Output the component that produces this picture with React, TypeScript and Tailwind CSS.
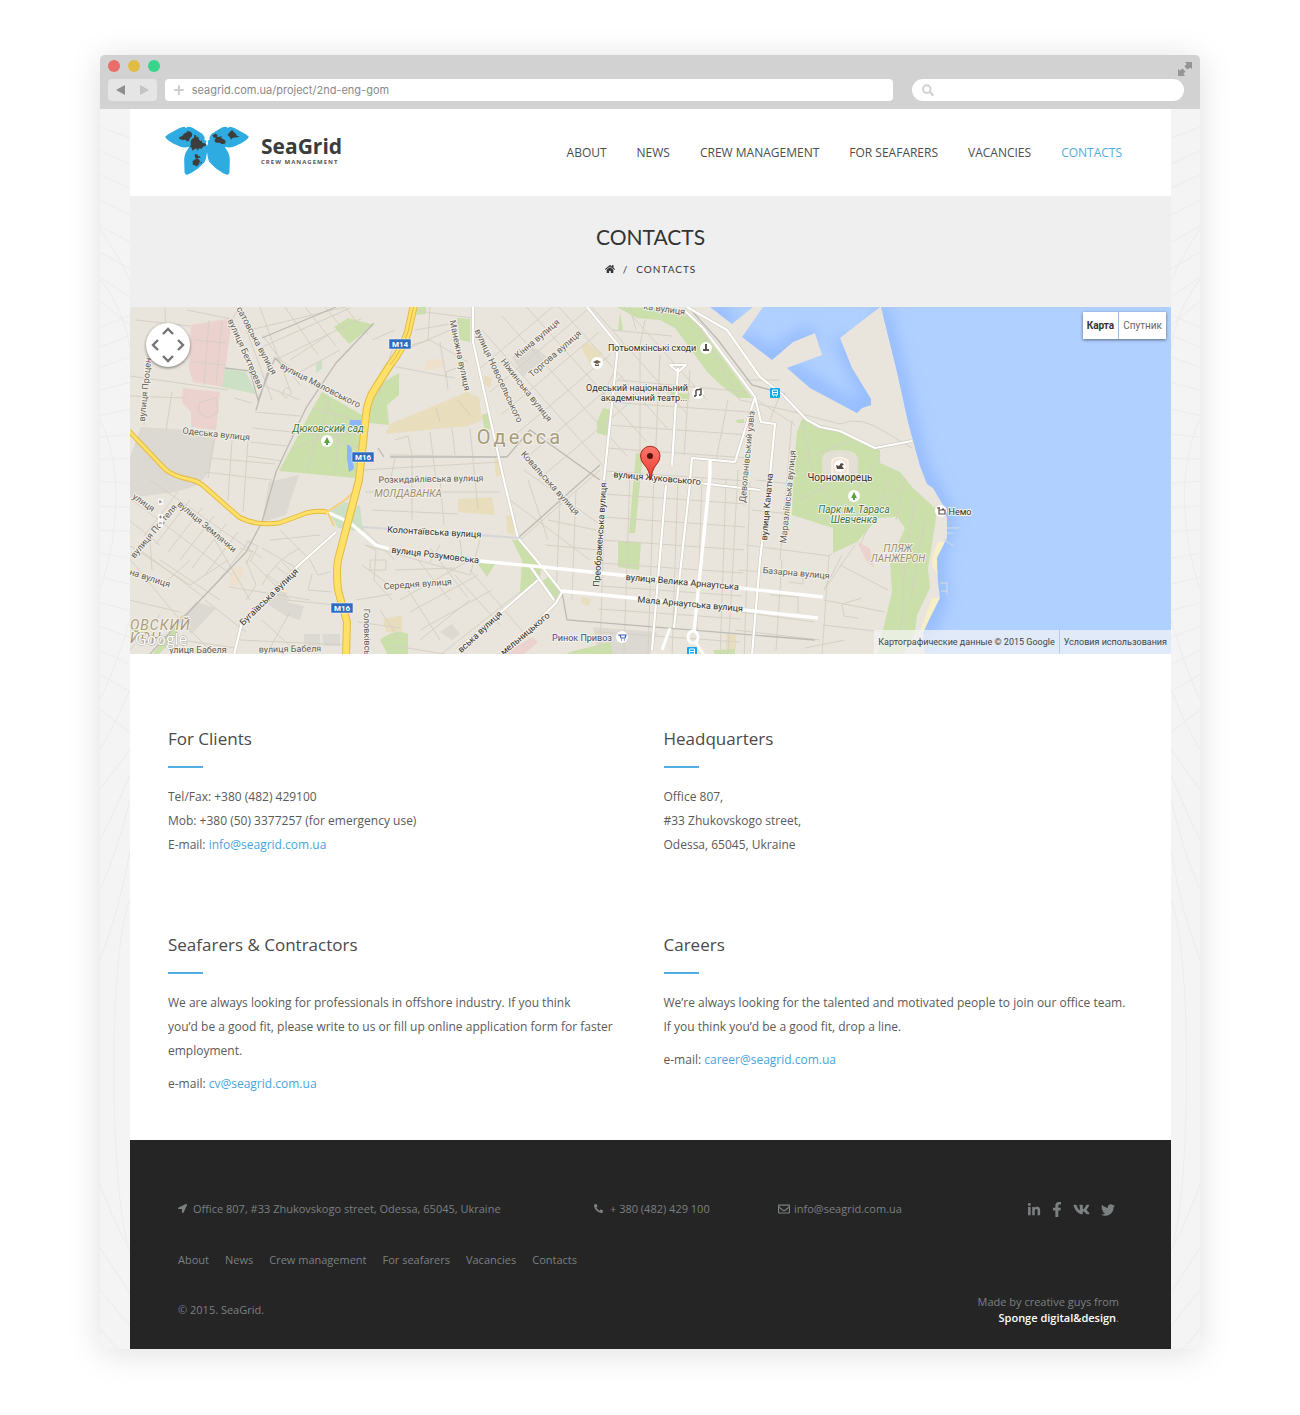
import type { ReactNode } from "react";
import {
  FaFacebookF,
  FaHome,
  FaLinkedinIn,
  FaLocationArrow,
  FaPhoneAlt,
  FaRegEnvelope,
  FaTwitter,
  FaVk,
} from "react-icons/fa";
import { clsx } from "clsx";

const navLinks = [
  "About",
  "News",
  "Crew management",
  "For seafarers",
  "Vacancies",
  "Contacts",
];

const socials = [
  { label: "LinkedIn", icon: <FaLinkedinIn size={14} /> },
  { label: "Facebook", icon: <FaFacebookF className="h-[15px] w-2.5" /> },
  { label: "VK", icon: <FaVk size={17} /> },
  { label: "Twitter", icon: <FaTwitter size={14} /> },
];

/* ---------- Browser frame ---------- */

function BrowserBar() {
  return (
    <div className="rounded-t-[5px] bg-[#d2d2d2] px-2 pb-2">
      <div className="flex h-6 items-start justify-between pt-[5px]">
        <div className="flex gap-2">
          <span className="size-3 rounded-full bg-[#e96d69]" />
          <span className="size-3 rounded-full bg-[#dfbd45]" />
          <span className="size-3 rounded-full bg-[#36d68a]" />
        </div>
        <button aria-label="Full screen" className="mt-0.5">
          <svg width="14" height="14" viewBox="0 0 14 14" fill="#949494">
            <path d="M7 0h7v7l-2-1.600L9.500 7.500 6.500 4.500 8.700 2z" />
            <path d="M7 14H0V7l2 1.600L4.500 6.500 7.500 9.500 5.300 12z" />
          </svg>
        </button>
      </div>
      <div className="flex h-[22px] items-stretch pr-2">
        <div className="mr-2 flex w-[49px] items-center justify-around rounded bg-[#e5e5e5]">
          <button aria-label="Back">
            <svg width="9" height="10" viewBox="0 0 9 10" fill="#8f8f8f">
              <path d="M0 5l9-5v10z" />
            </svg>
          </button>
          <button aria-label="Forward">
            <svg width="9" height="10" viewBox="0 0 9 10" fill="#c4c4c4">
              <path d="M9 5L0 0v10z" />
            </svg>
          </button>
        </div>
        <label className="mr-[19px] flex flex-1 items-center gap-2 rounded bg-white px-[9px]">
          <svg width="10" height="10" viewBox="0 0 10 10" fill="#cdcdcd">
            <path d="M4 0h2v4h4v2H6v4H4V6H0V4h4z" />
          </svg>
          <input
            type="text"
            aria-label="Address"
            defaultValue="seagrid.com.ua/project/2nd-eng-gom"
            className="w-full bg-transparent font-['Inter',sans-serif] text-[11px] text-[#8a8a8a] outline-none"
          />
        </label>
        <label className="flex w-[272px] items-center rounded-full bg-white px-2.5">
          <svg width="13" height="13" viewBox="0 0 13 13" fill="none" stroke="#d0d0d0" strokeWidth="2">
            <circle cx="5" cy="5" r="4" />
            <path d="M8 8l4 4" strokeWidth="2.4" />
          </svg>
          <input type="search" aria-label="Search" className="w-full bg-transparent px-2 text-[11px] outline-none" />
        </label>
      </div>
    </div>
  );
}

// Faint globe lines that show beside the page
function Gutter({ flip, className }: { flip?: boolean; className: string }) {
  return (
    <div className={clsx("relative shrink-0 overflow-hidden", className)}>
      <svg
        className={clsx("absolute inset-0 h-full w-full", flip && "-scale-x-100")}
        viewBox="0 0 30 1239"
        preserveAspectRatio="none"
        fill="none"
        stroke="#ececec"
      >
        <path d="M0 18L30 29M0 42L30 55M0 66L30 79M0 91L30 106M0 117L30 133M0 143L30 160M0 168L30 188M0 192L30 216M0 218L30 206M0 238L30 226M0 258L30 248M0 281L30 273M0 306L30 300M0 328L30 325M0 350L30 349M0 372L30 374M0 397L30 398M0 421L30 422M0 444L30 449M0 468L30 475M0 493L30 501M0 517L30 528M0 541L30 555M0 565L30 582" />
        <path d="M0 120Q18 145 30 172M0 170Q24 200 30 240M0 310Q16 345 16 386Q16 435 0 480M30 510Q15 560 0 590M0 600L30 623M0 640Q18 610 30 580M0 680L30 640" />
        <path d="M30 790C9 840 9 1060 27 1131M0 850Q20 800 30 740M0 780Q18 740 30 690M0 730Q16 700 30 665M0 1074Q10 1104 30 1140M0 1138L30 1183M0 1180L30 1216M0 1219L18 1239" />
      </svg>
    </div>
  );
}

/* ---------- Header ---------- */

function Logo() {
  return (
    <a href="#home" className="flex items-start gap-3" aria-label="SeaGrid Crew Management">
      <svg width="84" height="49" viewBox="0 0 250 146">
        <g fill="#2eabe1">
          <path
            id="wing"
            d="M0 33L8 25 42 7Q50 2 58 2L62 6 68 2Q76 2 82 5L112 24 118 34 117 41 123 44 122 52 125 60V78L122 96 118 107 100 125 78 140 66 145Q59 146 58 138L57 100Q58 82 66 72L72 62Q60 66 46 62L24 52 8 42z"
          />
          <use href="#wing" transform="matrix(-1 0 0 1 250 0)" />
        </g>
        <g fill="#3d3d3d">
          <path d="M41 34l10-4 5-7 8-4 3-4 9 2 5 6-1 8-6 5-2 8-7 2-4-5-8 1-10-3z" />
          <path d="M76 46l4-7 7-4-1-7 5-2 2 7 6-1 2 8 5 5 3-2 2 7 10 3 2 5-9 3-5 7-8-2-3 8-4-7-5 1-7 6-3-9-5-5 3-4z" />
          <path d="M88 84l10 1-2 3 7 2 4 6-7-2-4 4-6-2zM82 104l10-6 9 1 3 6-3 9-7 7-5-4-6-1zM106 106l4 3-4 4z" />
          <path d="M141 28l8-5 8 3-3 5 8 2 7-3-2 6 10 5 4 5-3 7-9 1-7-4-12-1-3-7 5-6-7-2z" />
          <path d="M186 27l7-9 7-6 4 5 6 5 4 7 8 3-12 2-8 1-6 6-2-7z" />
        </g>
      </svg>
      <span className="flex flex-col pt-2 font-['Open_Sans',sans-serif] font-bold text-[#3c3c3c]">
        <span className="text-[21px] leading-6">SeaGrid</span>
        <span className="text-[6px] leading-2 tracking-[1px] text-[#555]">CREW MANAGEMENT</span>
      </span>
    </a>
  );
}

function Header() {
  return (
    <header className="flex h-[87px] items-center justify-between bg-white pr-[49px] pb-1 pl-[35px]">
      <Logo />
      <nav className="flex gap-[30px] pt-1 text-[12px] uppercase text-[#4d4d4d]">
        {navLinks.map((link) => (
          <a key={link} href={`#${link}`} className={clsx(link === "Contacts" && "text-[#52ace0]")}>
            {link}
          </a>
        ))}
      </nav>
    </header>
  );
}

/* ---------- Map ---------- */

// n parallel lines, each shifted by (dx, dy) from the one before
const hatch = (x1: number, y1: number, x2: number, y2: number, dx: number, dy: number, n: number) =>
  Array.from({ length: n }, (_, i) => `M${x1 + dx * i} ${y1 + dy * i}L${x2 + dx * i} ${y2 + dy * i}`).join("");

const minorStreets = [
  // north-west blocks
  "M130 376L228 390M130 396L186 398M148 350L144 425M165 307L166 360M166 360L184 362M136 320L190 326M172 392L166 430M187 310L232 319L240 307M209 320L204 385M222 322L216 384M196 340L226 343M193 362L226 365M200 402L216 398L218 412L208 418L198 412z",
  hatch(240, 312, 272, 400, 18, -10, 2),
  "M262 335L300 385M250 330L345 307M262 347L350 308M275 360L362 318M285 307L318 355M305 307L336 346M325 307L352 340M345 307L368 335M290 360L328 335M300 372L340 350M262 385L300 400M268 370L276 358L290 366M282 395Q286 382 292 392L286 398z",
  "M255 412L300 416M252 428L292 432M250 442L288 446M247 456L282 461M234 398L252 403M214 440L208 478M232 440L228 500M248 440L243 512M210 458L275 464M205 472L272 480",
  "M312 408L355 420M322 400Q346 420 334 470M300 430L360 448M292 450Q330 430 358 434M306 470L330 400",
  // west
  hatch(178, 492, 144, 536, 12, 8, 7),
  "M150 480L262 558M132 500L232 575M129 545L190 585L228 560M129 558L180 620M140 550L205 598M150 540L152 570M160 560L220 600M129 600L180 612M215 540L250 600M250 560L290 600M262 548L300 570M270 540L320 535M280 530L310 560M262 585Q275 560 300 548M229 587L310 600M205 600L246 632M160 615L130 650M180 640L236 648M190 630L215 655M129 520L160 545M168 580L190 560M246 560L256 585L246 600",
  "M275 566l14 10M282 562l12 12M266 574l16 12M240 548l12 4-6 12M246 541l12 5-8 16M310 560L318 575 330 572M312 574L308 590 332 592M286 600L345 606M240 640L345 645M262 620L300 655M270 648L290 612M365 545L376 550 374 580 392 600M362 565L396 590M356 600L392 594M358 622L400 628M370 560h16v10h-16z",
  // centre-west
  "M379 395L392 350L430 340L468 362M392 366L455 378M400 352L450 330M415 330L462 322M410 310L472 318M430 307L428 340M440 342L446 378M395 330L372 340M390 455L505 457M395 440L408 436 412 455M430 432L436 480M452 428L455 455M470 428L478 510M362 470L500 462M365 492L500 492M395 458L390 482M412 458L412 520M440 480L444 525M372 510L458 514M448 390L446 372L462 366M436 408L440 422M458 400L470 415",
  "M365 545L470 575M440 545L430 562M395 570L455 568M400 600L470 560M410 612L478 575M420 630L492 590M380 610L400 640M405 585L440 640M455 575L500 625M470 570L530 640M480 540L470 575M418 560L450 600M430 548L468 598M460 540L462 558M390 645L450 655M420 640L470 600M440 655L520 592M452 560Q470 550 480 565M362 528L395 560",
  // diagonal centre blocks
  hatch(482, 330, 607, 470, 20, -14, 6),
  hatch(478, 370, 575, 288, 12, 22, 6),
  "M520 540L600 470M528 480L548 540M510 500L590 560M524 470L605 528M545 545L600 550M548 520L596 530M560 500L556 600M576 490L572 600",
  // right blocks
  hatch(606, 470, 600, 650, 24, 2, 7),
  hatch(608, 402, 750, 412, -1, 23, 11),
  "M612 330L672 336M617 345L672 350M630 307L636 330M645 320L640 345M618 365L600 400M618 380L748 392M640 350L640 455M660 355L655 465M690 370L684 455M728 400L716 460M744 380L780 380M780 395L770 420M757 400L795 425M738 470L728 655M792 420L780 560M756 480L790 484M752 510L790 514M746 545L830 556M738 570L830 578M740 612L815 622M735 630L820 640M782 560L776 650M832 554L829 555L822 655M842 555L824 590M855 545L824 590M840 565L888 590M824 600L885 612M823 625L884 632M805 648L845 640M862 598L842 604 844 616 858 618M789 582l14 2v-6M770 595l28 2v16",
  // park walks
  "M802 425L815 480L840 510M815 455L850 440M880 455L850 500L838 520M890 480L860 545M905 478L896 520M915 500L905 560L900 650M925 520L910 600M800 500L835 480M870 520L902 485",
  "M700 328L740 400Q790 410 840 424Q860 415 885 432L912 448",
];

const whiteRoads = [
  "M473 307V342L505 485L518 538L543 568L562 592L556 603L503 655",
  "M587 307L618 345L604 480",
  "M678 368L672 465M670 365L678 372L686 365z",
  "M683 309L703 328L755 397L735 462L692 458L690 480",
  "M755 397L761 422L775 424L769 485L760 560L752 655",
  "M687 307L727 330L760 377L782 394L807 420L820 427L840 431L875 448L912 441",
  "M666 485L652 650M690 483L674 628M336 532L299 565L242 622L234 655M530 566L554 600M538 580L457 650",
  "M612 473L760 490",
];

type MapLabel = {
  t: string;
  x: number;
  y: number;
  r?: number;
  s?: number;
  kind?: "street" | "place" | "park" | "district" | "market";
};

const labelColor = {
  street: "#625d56",
  place: "#33302c",
  park: "#3d7a3c",
  district: "#9c8d6f",
  market: "#3f4a85",
};

const labels: MapLabel[] = [
  { t: "вулиця Маловського", x: 319, y: 388, r: 27 },
  { t: "вулиця Бехтерева", x: 243, y: 355, r: 66 },
  { t: "сатовська вулиця", x: 254, y: 342, r: 62 },
  { t: "Одеська вулиця", x: 216, y: 437, r: 6 },
  { t: "вулиця Процен", x: 148, y: 390, r: -84 },
  { t: "Дюковский сад", x: 328, y: 432, s: 10, kind: "park" },
  { t: "Манежна вулиця", x: 457, y: 356, r: 78 },
  { t: "вулиця Новосельського", x: 496, y: 377, r: 65 },
  { t: "Ніжинська вулиця", x: 524, y: 392, r: 52 },
  { t: "Кінна вулиця", x: 539, y: 341, r: -40 },
  { t: "Торгова вулиця", x: 557, y: 356, r: -41 },
  { t: "Потьомкінські сходи", x: 652, y: 351, kind: "place" },
  { t: "Одеський національний", x: 637, y: 391, kind: "place" },
  { t: "академічний театр...", x: 644, y: 401, kind: "place" },
  { t: "Розкидайлівська вулиця", x: 431, y: 482, r: -1 },
  { t: "МОЛДАВАНКА", x: 408, y: 497, s: 10, kind: "district" },
  { t: "Ковальська вулиця", x: 548, y: 485, r: 48 },
  { t: "Колонтаївська вулиця", x: 434, y: 535, r: 3, kind: "place" },
  { t: "вулиця Розумовська", x: 435, y: 558, r: 7, kind: "place" },
  { t: "Середня вулиця", x: 418, y: 587, r: -4 },
  { t: "Преображенська вулиця", x: 603, y: 535, r: -86, kind: "place" },
  { t: "вулиця Жуковського", x: 657, y: 481, r: 5, kind: "place" },
  { t: "вулиця Велика Арнаутська", x: 682, y: 585, r: 5, kind: "place" },
  { t: "Мала Арнаутська вулиця", x: 690, y: 607, r: 5, kind: "place" },
  { t: "Деволанівський узвіз", x: 750, y: 457, r: -84 },
  { t: "вулиця Канатна", x: 770, y: 507, r: -85, kind: "place" },
  { t: "Маразліївська вулиця", x: 791, y: 497, r: -84 },
  { t: "Базарна вулиця", x: 796, y: 576, r: 5 },
  { t: "Чорноморець", x: 840, y: 481, s: 10, kind: "place" },
  { t: "Парк ім. Тараса", x: 854, y: 513, s: 10, kind: "park" },
  { t: "Шевченка", x: 854, y: 523, s: 10, kind: "park" },
  { t: "ПЛЯЖ", x: 898, y: 552, s: 10, kind: "district" },
  { t: "ЛАНЖЕРОН", x: 898, y: 562, s: 10, kind: "district" },
  { t: "Немо", x: 960, y: 515, kind: "place" },
  { t: "Ринок Привоз", x: 582, y: 641, kind: "market" },
  { t: "вулиця Землячки", x: 205, y: 529, r: 40 },
  { t: "вулиця Пестеля", x: 156, y: 533, r: -50 },
  { t: "улиця", x: 142, y: 505, r: 35 },
  { t: "на вулиця", x: 149, y: 581, r: 18 },
  { t: "Бугаївська вулиця", x: 271, y: 599, r: -44, kind: "place" },
  { t: "Головківсь", x: 364, y: 632, r: 89 },
  { t: "улиця Бабеля", x: 198, y: 653 },
  { t: "вулиця Бабеля", x: 290, y: 652, r: -1 },
  { t: "вська вулиця", x: 482, y: 634, r: -43, kind: "place" },
  { t: "мельницького", x: 527, y: 636, r: -40, kind: "place" },
  { t: "ка вулиця", x: 664, y: 312, r: 8 },
];

function Poi({ x, y, children }: { x: number; y: number; children: ReactNode }) {
  return (
    <g transform={`translate(${x} ${y})`}>
      <circle r="6" fill="#fff" />
      {children}
    </g>
  );
}

function MapDrawing() {
  return (
    <svg
      className="absolute inset-0 h-full w-full font-['Roboto',sans-serif]"
      viewBox="130 307 1041 347"
      preserveAspectRatio="xMidYMid slice"
      role="img"
      aria-label="Map of Odessa"
    >
      <defs>
        <linearGradient id="pin" x1="0" y1="0" x2="0" y2="1">
          <stop offset="0" stopColor="#ff776b" />
          <stop offset="1" stopColor="#e8392f" />
        </linearGradient>
        <filter id="shore" x="-20%" y="-20%" width="140%" height="140%">
          <feGaussianBlur stdDeviation="8" />
        </filter>
        <clipPath id="water">
          <path d="M881 307L897 372L908 422L920 466L927 484L933 488L943 505L947 518L947 538L937 558L938 582L940 598L930 618L923 633L925 655H1171V307z" />
          <path d="M763 307L742 337L772 360L793 342L815 333L822 355L787 368L810 388L857 413L862 408L871 405V399L852 368L840 338L880 307z" />
          <path d="M710 307H753L732 324z" />
        </clipPath>
      </defs>

      <rect x="100" y="300" width="1100" height="370" fill="#e9e5dc" />

      {/* built-up and industrial areas */}
      <g fill="#dcd8d2">
        <path d="M141 427L217 432L209 472L198 485L176 492L129 498V460z" />
        <path d="M269 482L299 475L286 515L262 522zM196 602L216 608L192 634L178 622zM274 590L287 593V617L265 602zM287 602L304 606L300 620L287 616z" />
        <path d="M512 357L532 345L547 357L523 377zM593 627L657 632L650 655H598zM304 634h16v18h-16zM322 634h18v12h-16zM440 632l12-8 8 10-8 6z" />
      </g>
      <g fill="#ebd2cf">
        <path d="M191 325L232 318L223 387L193 382L189 368z" />
        <path d="M183 388L220 392L216 430L191 427V412L182 402z" />
        <path d="M500 655L533 637L538 642L523 655zM857 542L870 548L874 568L866 560z" />
      </g>
      <g fill="#e8ddbd">
        <path d="M390 424L467 392L479 397L482 420L468 426L385 434z" />
        <path d="M587 342L602 353L593 370L581 347zM458 499L492 497L495 515L458 512zM383 619L402 615V632H386zM484 375l8 3-2 10-6-4zM494 458l6 2 2 15-6 2zM506 515l6 1 2 20-7-4zM582 597l9 2-2 7-8-3zM726 633h10v16h-10z" />
        <path d="M232 570q6-6 12-2l-4 14q-8 8-10 2zM425 362q12-6 20 0-4 8-20 8z" fill="#eee0cc" />
      </g>
      <g fill="#cadfaa">
        <path d="M322 392L362 415L356 478L279 471L309 415z" />
        <path d="M348 318L374 325L349 344L334 327zM399 373L380 384L371 398L369 423L389 425L387 405L399 395z" />
        <path d="M457 318L470 319V342L460 340zM482 415L490 412V430L484 428zM418 307h8v7l-10 1z" />
        <path d="M617 307L637 318L660 320L675 328L690 348L707 372L722 386L738 398L752 398L702 330L683 309z" />
        <path d="M618 541L641 542L639 570L618 567zM636 453L643 454L635 533H629z" />
        <path d="M512 540L520 540L541 568L540 580L520 593L522 560zM540 583L548 577L560 592L556 600zM477 563L495 564L487 577z" />
        <path d="M570 652L610 642L613 655H565zM380 640q14-12 28-6v21h-20zM713 650l22-1v6h-20z" />
        <path d="M597 422l6-14 8 2-4 26-10-3zM620 312l3 18-5 1zM736 420l8-1v4h-7zM670 392l20 2-2 8-16-4z" />
        <path d="M802 419L840 431L880 450L880 463L900 472L913 488L937 510L935 525L928 568L930 588L917 615L915 632L903 655H877L892 592L890 562L905 528L897 517L878 518L857 542L833 553V528L792 515L793 475L797 432z" />
        <path d="M180 617l6-4-14 28-14 14h-6z" />
      </g>
      <path d="M225 369L246 372L256 394L222 387zM316 365l6-6v10l-6 4zM329 512L345 502L360 506L363 532L338 528z" fill="#cbe0c4" />
      <path d="M822 460q0-10 18-10t18 10v18q-18 6-36 0z" fill="#e4dfd5" />
      <path d="M832 460q8-5 16 0v14h-16z" fill="#f3e3d3" stroke="#fff" />
      <path d="M938 542h8l-7 14-3 14 5-1-1 9-8-12q0-14 6-24zM932 598h9l-11 20-7 15-2-4z" fill="#f7efc5" />
      <path d="M350 420h11v6h-6l-6 2zM347 445q6-1 5 12l2 12-5 3-2-14z" fill="#8ab5f9" />

      {/* water, darker along the shore */}
      <g clipPath="url(#water)">
        <rect x="700" y="300" width="480" height="360" fill="#b0d0ff" />
        <g fill="none" stroke="#8eb6ff" strokeWidth="13" filter="url(#shore)">
          <path d="M881 307L897 372L920 466L933 488L947 518L937 558L940 598L923 640" />
          <path d="M742 337L772 360L793 342L815 333M787 368L857 413L871 400L840 338M710 307L732 324" />
        </g>
      </g>
      <path d="M947 528h12M947 533h6M944 540l10 6M940 583h7v12M941 591h6" fill="none" stroke="#d8dbdc" />

      {/* streets */}
      <path d={minorStreets.join("")} fill="none" stroke="#d6d0c4" strokeWidth="1" />
      <g fill="none" stroke="#bcbab6" strokeWidth="1.3">
        <path d="M374 323L336 363L306 408L276 472L262 522L246 552L186 615L149 655" />
        <path d="M262 338L336 307M225 368L250 371L258 400L275 358L282 365M256 410L270 365M390 457L507 457L530 430L600 480M518 538L600 465M562 592L567 620L815 640M378 448L384 457" />
        <path d="M690 309L718 340L752 385L785 394" />
      </g>
      <g fill="none" strokeLinejoin="round">
        <path d={whiteRoads.join("")} stroke="#d2ccc0" strokeWidth="3.4" />
        <path d={whiteRoads.join("")} stroke="#fff" strokeWidth="2.2" />
        <path d="M562 591L633 598L818 618M480 561L543 567L620 575L823 597M710 460L710 475L694 632M327 512L349 522L376 545L389 549" stroke="#fff" strokeWidth="3.4" />
        <path d="M362 527L520 538" stroke="#d6d6d6" strokeWidth="2" />
        <ellipse cx="693" cy="637" rx="5" ry="6" stroke="#fff" strokeWidth="3" />
        <path d="M696 643L704 655M670 628L662 650" stroke="#fff" strokeWidth="3" />
      </g>
      <g fill="none" strokeLinejoin="round">
        <path d="M327 512L345 500L356 490M328 513L334 526" stroke="#f4cf7c" strokeWidth="2" />
        <path d="M129 431L165 469Q172 476 192 480Q200 482 206 488L239 517Q255 526 279 523Q296 517 306 513Q318 510 327 512" stroke="#e5b944" strokeWidth="5" />
        <path d="M129 431L165 469Q172 476 192 480Q200 482 206 488L239 517Q255 526 279 523Q296 517 306 513Q318 510 327 512" stroke="#ffe168" strokeWidth="3" />
        <path d="M415 300L408 332Q402 350 390 365L376 387Q367 400 366 415L359 480L338 560Q336 572 338 590L347 622L346 656" stroke="#e5b944" strokeWidth="8" />
        <path d="M415 300L408 332Q402 350 390 365L376 387Q367 400 366 415L359 480L338 560Q336 572 338 590L347 622L346 656" stroke="#ffe168" strokeWidth="6" />
        <path d="M415 300L408 332Q402 350 390 365" stroke="#e5b944" />
      </g>

      {/* road shields */}
      {[
        ["M14", 389, 339],
        ["M16", 352, 452],
        ["M16", 331, 603],
      ].map(([name, x, y]) => (
        <g key={`${x}`} transform={`translate(${x} ${y})`}>
          <rect width="22" height="10" fill="#2f6cc0" stroke="#fff" strokeWidth="0.5" />
          <text x="11" y="8" textAnchor="middle" fontSize="8" fontWeight="700" fill="#fff">
            {name}
          </text>
        </g>
      ))}

      {/* points of interest */}
      <Poi x={597} y={363}>
        <path d="M-4-1l4-2 4 2-4 2zM-2 1v2h4V1L0 2z" fill="#6a5a4c" />
      </Poi>
      <Poi x={706} y={348}>
        <path d="M-1-4h2v5h2v2h-6V1h2z" fill="#5b5048" />
      </Poi>
      <Poi x={698} y={393}>
        <path d="M-2-3l5-1v6M-2-3v6M-4 3h2M1 2h2" fill="none" stroke="#4c443e" strokeWidth="1.4" />
      </Poi>
      <Poi x={327} y={441}>
        <path d="M0-4l3 6h-2v2h-2V2h-2z" fill="#57a53c" />
      </Poi>
      <Poi x={854} y={496}>
        <path d="M0-4l3 6h-2v2h-2V2h-2z" fill="#57a53c" />
      </Poi>
      <Poi x={840} y={466}>
        <path d="M-4-1l3 1 2-3 3 1-2 2 2 3h-7z" fill="#55493f" />
      </Poi>
      <Poi x={941} y={511}>
        <path d="M-2-1h6v4h-6zM-4-3h3M-2-4v3M1-2h2" fill="none" stroke="#6b4d40" strokeWidth="1.2" />
      </Poi>
      <Poi x={622} y={637}>
        <path d="M-4-2h2l1 3h4l1-3h-6M-1 3h1M2 3h1" fill="none" stroke="#3a5bb0" strokeWidth="1.2" />
      </Poi>
      {[
        [770, 388],
        [687, 647],
      ].map(([x, y]) => (
        <g key={x} transform={`translate(${x} ${y})`}>
          <rect width="10" height="10" rx="1" fill="#12a9ee" />
          <path d="M2.500 2h5v5h-5zM3 8h1M6 8h1M3 4.500h4" fill="none" stroke="#fff" />
        </g>
      ))}

      {/* labels */}
      <g textAnchor="middle" stroke="#f4f1ea" strokeWidth="2" strokeLinejoin="round" style={{ paintOrder: "stroke" }}>
        {labels.map(({ t, x, y, r = 0, s = 9, kind = "street" }) => (
          <text
            key={t}
            transform={`translate(${x} ${y}) rotate(${r})`}
            fontSize={s}
            fill={labelColor[kind]}
            fontStyle={kind === "park" || kind === "district" ? "italic" : undefined}
          >
            {t}
          </text>
        ))}
        <text x="520" y="444" fontSize="20" letterSpacing="3" fill="#a89c7d">
          Одесса
        </text>
        <g fontSize="14" fontStyle="italic" fill="#a89c7d" textAnchor="start" letterSpacing="1">
          <text x="130" y="630">
            ОВСКИЙ
          </text>
          <text x="130" y="643">
            ЙОН
          </text>
        </g>
      </g>

      {/* marker */}
      <path d="M650.500 480q-1-10-6-15-4-4-4-9a9.750 9.750 0 0 1 19.500 0q0 5-4 9-4 5-5.500 15z" fill="url(#pin)" stroke="#a8281f" />
      <circle cx="650" cy="456" r="3" fill="#551310" />

      {/* collapsed zoom control */}
      <g fill="#fff" fillOpacity="0.85">
        <rect x="158" y="499" width="5" height="6" />
        <rect x="158" y="514" width="5" height="13" />
      </g>
      <path d="M159 502h3M160 500v3M159 517h3M160.500 515.500v3M159 523h3" stroke="#888" />
      <text x="135" y="645" fontFamily="Open Sans" fontSize="16" fill="#fff" stroke="#aaa6a0" strokeWidth="1" style={{ paintOrder: "stroke" }}>
        Google
      </text>
    </svg>
  );
}

const panArrows = [
  { label: "Up", cls: "col-start-2 row-start-1", d: "M1 7l5-5 5 5" },
  { label: "Left", cls: "col-start-1 row-start-2", d: "M8 1L3 6l5 5" },
  { label: "Right", cls: "col-start-3 row-start-2", d: "M4 1l5 5-5 5" },
  { label: "Down", cls: "col-start-2 row-start-3", d: "M1 5l5 5 5-5" },
];

function MapSection() {
  return (
    <section className="relative h-[347px] overflow-hidden">
      <MapDrawing />
      <div className="absolute top-4 left-4 grid size-11 grid-cols-3 grid-rows-3 place-items-center rounded-full bg-white p-1 shadow-[0_1px_3px_rgba(0,0,0,0.5)]">
        {panArrows.map((arrow) => (
          <button key={arrow.label} aria-label={arrow.label} className={arrow.cls}>
            <svg width="12" height="12" viewBox="0 0 12 12" fill="none" stroke="#757575" strokeWidth="2.4">
              <path d={arrow.d} />
            </svg>
          </button>
        ))}
      </div>
      <div className="absolute top-[5px] right-[5px] flex h-[27px] divide-x divide-[#a3bde0] bg-white font-['Roboto',sans-serif] text-[10px] shadow-[0_1px_3px_rgba(0,0,0,0.5)]">
        <button className="px-1 font-bold text-[#333]">Карта</button>
        <button className="px-1 text-[#666]">Спутник</button>
      </div>
      <div className="absolute right-0 bottom-0 flex h-6 items-center divide-x divide-[#b0ccf5] bg-[#f5f5f5]/70 font-['Roboto',sans-serif] text-[9px] text-[#444]">
        <span className="px-1 leading-6">Картографические данные © 2015 Google</span>
        <a href="#terms" className="px-1 leading-6">
          Условия использования
        </a>
      </div>
    </section>
  );
}

/* ---------- Contacts ---------- */

function Block({ title, children }: { title: string; children: ReactNode }) {
  return (
    <section>
      <h2 className="text-[17px] leading-6 text-[#4a4a4a]">{title}</h2>
      <div className="mt-[15px] mb-[17px] h-0.5 w-[35px] bg-[#52ace0]" />
      {children}
    </section>
  );
}

function Mail({ to }: { to: string }) {
  return (
    <a href={`mailto:${to}`} className="text-[#47a5de]">
      {to}
    </a>
  );
}

function Contacts() {
  return (
    <main className="bg-white px-[38px] pt-[73px] pb-11 text-[12px] leading-6 text-[#5a5a5a]">
      <div className="grid grid-cols-2 gap-x-[26px] gap-y-[76px]">
        <Block title="For Clients">
          <p>Tel/Fax: +380 (482) 429100</p>
          <p>Mob: +380 (50) 3377257 (for emergency use)</p>
          <p>
            E-mail: <Mail to="info@seagrid.com.ua" />
          </p>
        </Block>
        <Block title="Headquarters">
          <p>Office 807,</p>
          <p>#33 Zhukovskogo street,</p>
          <p>Odessa, 65045, Ukraine</p>
        </Block>
        <Block title="Seafarers & Contractors">
          <p>
            We are always looking for professionals in offshore industry. If you think
            <br />
            you’d be a good fit, please write to us or fill up online application form for faster employment.
          </p>
          <p className="mt-[9px]">
            e-mail: <Mail to="cv@seagrid.com.ua" />
          </p>
        </Block>
        <Block title="Careers">
          <p>
            We’re always looking for the talented and motivated people to join our office team.
            <br />
            If you think you’d be a good fit, drop a line.
          </p>
          <p className="mt-[9px]">
            e-mail: <Mail to="career@seagrid.com.ua" />
          </p>
        </Block>
      </div>
    </main>
  );
}

/* ---------- Footer ---------- */

function Footer() {
  return (
    <footer className="bg-[#252525] pt-[59px] pr-[52px] pb-[23px] pl-12 text-[11px] leading-4 text-[#7b8080]">
      <div className="grid grid-cols-[416fr_184fr_249fr_auto] items-center">
        <span className="flex items-center gap-1.5">
          <FaLocationArrow size={9} />
          Office 807, #33 Zhukovskogo street, Odessa, 65045, Ukraine
        </span>
        <span className="flex items-center gap-[7px]">
          <FaPhoneAlt size={9} />+ 380 (482) 429 100
        </span>
        <a href="mailto:info@seagrid.com.ua" className="flex items-center gap-1">
          <FaRegEnvelope size={12} />
          info@seagrid.com.ua
        </a>
        <div className="flex items-center gap-[11px] pt-0.5 pr-1">
          {socials.map((s) => (
            <a key={s.label} href={`#${s.label}`} aria-label={s.label}>
              {s.icon}
            </a>
          ))}
        </div>
      </div>
      <nav className="mt-[34px] flex gap-4">
        {navLinks.map((link) => (
          <a key={link} href={`#${link}`}>
            {link}
          </a>
        ))}
      </nav>
      <div className="mt-[26px] flex items-center justify-between">
        <p>© 2015. SeaGrid.</p>
        <p className="text-right">
          Made by creative guys from
          <br />
          <a href="#sponge" className="font-semibold text-white">
            Sponge digital&amp;design
          </a>
          .
        </p>
      </div>
    </footer>
  );
}

export default function App() {
  return (
    <div className="min-h-screen bg-white px-[100px] pt-[55px] pb-[67px] font-['Open_Sans',sans-serif]">
      <div className="rounded-[5px] bg-[#f4f4f4] shadow-[0_4px_34px_rgba(0,0,0,0.13)]">
        <BrowserBar />
        <div className="flex">
          <Gutter className="w-[30px]" />
          <div className="min-w-0 flex-1">
            <Header />
            <div className="flex h-[111px] flex-col items-center bg-[#efefef] pt-[26px] font-['Lato',sans-serif] text-[#333]">
              <h1 className="text-[21px] leading-[30px]">CONTACTS</h1>
              <div className="mt-[9px] flex items-center gap-2 text-[10px] leading-4 tracking-[1px]">
                <a href="#home" aria-label="Home">
                  <FaHome size={10} />
                </a>
                <span>/</span>
                <span>CONTACTS</span>
              </div>
            </div>
            <MapSection />
            <Contacts />
            <Footer />
          </div>
          <Gutter flip className="w-[29px]" />
        </div>
      </div>
    </div>
  );
}
